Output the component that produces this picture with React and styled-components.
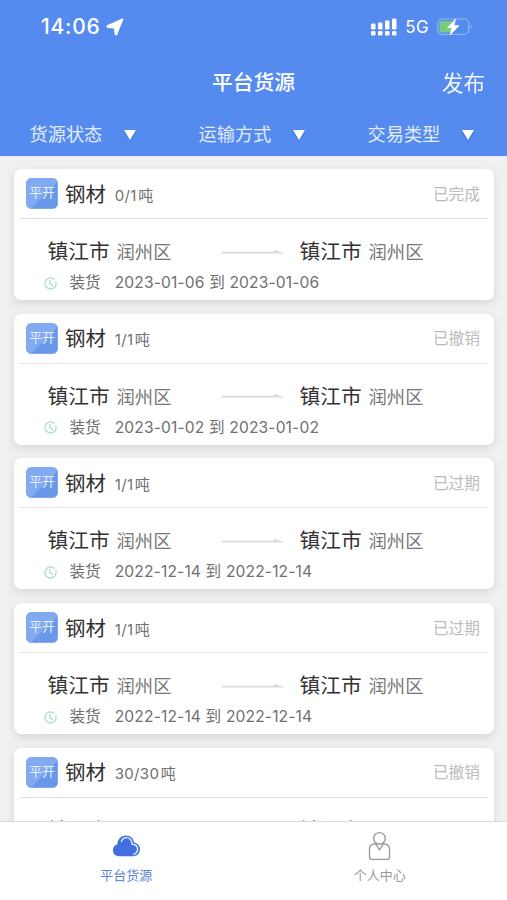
import React from 'react';
import styled, { createGlobalStyle } from 'styled-components';

const GlobalStyle = createGlobalStyle`
  * { box-sizing: border-box; }
  body { margin: 0; background: #f0f0f1; }
`;

const Screen = styled.div`
  width: 507px;
  height: 900px;
  display: flex;
  flex-direction: column;
  overflow: hidden;
  background: #f0f0f1;
  font-family: Inter, 'Noto Sans CJK SC', sans-serif;
  white-space: nowrap;
`;

const Header = styled.header`
  flex: none;
  height: 156px;
  background: #558bee;
  color: #fff;
`;

const StatusBar = styled.div`
  height: 54px;
  display: flex;
  align-items: center;
  padding: 0 34px 0 41px;
`;

const Clock = styled.span`
  font-size: 21px;
  line-height: 26px;
  font-weight: 500;
  letter-spacing: 0.8px;
  margin-right: 5px;
`;

const StatusIcons = styled.div`
  margin-left: auto;
  display: flex;
  align-items: center;
`;

const Network = styled.span`
  font-size: 17px;
  line-height: 22px;
  letter-spacing: 0.4px;
  margin: 0 8px 0 8px;
`;

const TitleBar = styled.div`
  height: 57px;
  display: grid;
  grid-template-columns: 1fr auto 1fr;
  align-items: center;
  padding: 0 22px;
`;

const Title = styled.h1`
  grid-column: 2;
  margin: 1px 0 0;
  font-size: 20.8px;
  line-height: 30px;
  font-weight: 500;
`;

const Publish = styled.span`
  justify-self: end;
  font-size: 21.5px;
  line-height: 30px;
  opacity: 0.93;
`;

const Filters = styled.div`
  height: 45px;
  display: grid;
  grid-template-columns: repeat(3, 169px);
`;

const Filter = styled.div`
  display: flex;
  align-items: center;
  height: 44px;
  padding-left: 29.5px;
  font-size: 18.2px;
  color: #e2ecff;
`;

const Caret = styled.svg`
  margin: 3px 0 0 21.7px;
  overflow: visible;
  filter: drop-shadow(0 1px 1px rgba(30, 70, 160, 0.35));
`;

const List = styled.main`
  flex: none;
  height: 665px;
  overflow: hidden;
  padding: 12px 13px 0 14px;
  display: flex;
  flex-direction: column;
  gap: 13.7px;
  border-top: 1px solid #e8edf6;
`;

const Card = styled.article`
  flex: none;
  height: 131px;
  border-radius: 7px;
  background: #fff;
  box-shadow: 0 3px 9px rgba(0, 0, 0, 0.11);
`;

const CardHead = styled.div`
  height: 50px;
  margin: 0 6px;
  padding: 0 8px 0 6px;
  display: flex;
  align-items: center;
  border-bottom: 1.5px solid #e2e2e2;
`;

const Badge = styled.span`
  width: 32px;
  height: 31px;
  border-radius: 5px;
  border: 1px solid #82a9ec;
  display: flex;
  align-items: center;
  justify-content: center;
  background: linear-gradient(135deg, #82aaf0 0 57%, #6a98e8 57.5%);
  color: #e7f0ff;
  font-size: 12.8px;
  line-height: 20px;
  padding-bottom: 1px;
`;

const Goods = styled.span`
  margin: 2px 0 0 7px;
  font-size: 20.4px;
  line-height: 30px;
  color: #2f2f2f;
`;

const Quantity = styled.span`
  margin: 4px 0 0 9px;
  font-size: 15px;
  line-height: 22px;
  letter-spacing: 0.3px;
  color: #707070;
`;

const Unit = styled.span`
  margin-left: 1.5px;
`;

const State = styled.span`
  margin: 2px 0 0 auto;
  font-size: 15.7px;
  line-height: 22px;
  color: #bbb;
`;

const Route = styled.div`
  height: 30px;
  margin-top: 18px;
  padding-left: 33.5px;
  display: grid;
  grid-template-columns: 174px 78px auto;
`;

const Place = styled.div`
  display: flex;
  align-items: center;
`;

const City = styled.span`
  font-size: 20.7px;
  line-height: 30px;
  color: #333;
`;

const District = styled.span`
  margin-left: 7px;
  font-size: 18.3px;
  line-height: 26px;
  color: #777;
`;

const Arrow = styled.svg`
  align-self: center;
  margin-top: 1px;
`;

const Schedule = styled.div`
  height: 24px;
  margin-top: 4px;
  padding-left: 29.5px;
  display: flex;
  align-items: center;
  font-size: 15.6px;
  line-height: 22px;
  color: #6f6f6f;
`;

const Loading = styled.span`
  margin: 0 14px 0 13px;
`;

const Dates = styled.span`
  letter-spacing: 0.14px;
`;

const TabBar = styled.nav`
  flex: none;
  height: 79px;
  background: #fff;
  border-top: 1px solid #dcdcdc;
  display: grid;
  grid-template-columns: 1fr 1fr;
`;

const Tab = styled.div`
  display: flex;
  flex-direction: column;
  align-items: center;
  padding: 8px 1px 0 0;
  color: ${(p) => (p.$active ? '#5b83d6' : '#999')};
`;

const TabIcon = styled.svg`
  height: 31px;
  margin-bottom: 4px;
`;

const TabLabel = styled.span`
  font-size: 13px;
  line-height: 20px;
`;

const filters = ['货源状态', '运输方式', '交易类型'];

const orders = [
  { quantity: '0/1', state: '已完成', date: '2023-01-06' },
  { quantity: '1/1', state: '已撤销', date: '2023-01-02' },
  { quantity: '1/1', state: '已过期', date: '2022-12-14' },
  { quantity: '1/1', state: '已过期', date: '2022-12-14' },
  { quantity: '30/30', state: '已撤销' },
];

function LocationIcon() {
  return (
    <svg width="18" height="18" viewBox="0 0 18 18">
      <path d="M16.6 1.2 L10.6 16 Q10 17 9.4 16 L8.6 9.8 L1.9 9.2 Q.6 8.6 1.9 7.7Z" fill="#fff" stroke="#fff" strokeWidth="1.6" strokeLinejoin="round" />
    </svg>
  );
}

function SignalIcon() {
  return (
    <svg width="26" height="18" viewBox="0 0 26 18" fill="#fff">
      {[5, 4, 2, 0].map((top, i) => (
        <g key={i}>
          <rect x={i * 7} y={top + 0.5} width="4.5" height={11 - top} rx="1.2" />
          <rect x={i * 7} y="13" width="4.5" height="4.5" rx="1.3" />
        </g>
      ))}
    </svg>
  );
}

function BatteryIcon() {
  return (
    <svg width="36" height="18" viewBox="0 0 36 18">
      <rect x=".8" y="1" width="31" height="15.5" rx="4.5" fill="none" stroke="#94b5f5" strokeWidth="1.2" />
      <path d="M33.5 6.5 Q36 8.7 33.5 11Z" fill="#94b5f5" />
      <path d="M5 3 H15 V14.5 H5 Q2.5 14.5 2.5 12 V5.5 Q2.5 3 5 3Z" fill="#7acb7d" />
      <path d="M18.5 1 L10.5 9.7 H15 L13.2 17 L22 7.6 H17Z" fill="#fff" stroke="#fff" strokeWidth=".7" strokeLinejoin="round" />
    </svg>
  );
}

function ClockIcon() {
  return (
    <svg width="13" height="13" viewBox="0 0 13 13" fill="none" stroke="#9fd5c8" strokeWidth="1.1">
      <circle cx="6.5" cy="6.5" r="5.6" strokeDasharray="30 2 2 1.2" />
      <path d="M5.9 3 V6.7 L9 8.7" />
    </svg>
  );
}

function CloudIcon() {
  return (
    <TabIcon width="29" viewBox="0 0 29 31">
      <path d="M7.2 26.3 Q1 25.9 1 20.2 Q1 15.6 5.2 14.4 Q6.2 5.7 13.6 5.4 Q20.6 5.2 22.2 12.4 Q28 13.6 28 19.6 Q27.6 25.5 21.8 26.3Z" fill="#416ee0" />
      <path d="M9.3 11.6 Q10.8 7.6 14.2 7.6 Q19.6 7.6 20.1 14.2 Q25.5 14.5 25.6 19.3 Q25.5 22.9 21.8 24.3" fill="none" stroke="#e7efff" strokeWidth="1.4" strokeLinecap="round" />
    </TabIcon>
  );
}

function PersonIcon() {
  return (
    <TabIcon width="23" viewBox="0 0 23 31" fill="none" stroke="#9b9b9b" strokeWidth="1.4" strokeLinejoin="round">
      <circle cx="11.5" cy="8.4" r="5.8" />
      <path d="M7.8 13.8 Q1.5 14 1.5 19 V27 Q1.5 29.4 4 29.4 H19 Q21.5 29.4 21.5 27 V19 Q21.5 14 15.2 13.8 L11.5 20Z" />
    </TabIcon>
  );
}

function Location() {
  return (
    <Place>
      <City>镇江市</City>
      <District>润州区</District>
    </Place>
  );
}

function OrderCard({ quantity, state, date }) {
  return (
    <Card>
      <CardHead>
        <Badge>平开</Badge>
        <Goods>钢材</Goods>
        <Quantity>
          {quantity}
          <Unit>吨</Unit>
        </Quantity>
        <State>{state}</State>
      </CardHead>
      <Route>
        <Location />
        <Arrow width="64" height="8" viewBox="0 0 64 8">
          <path d="M0 2.8 H52 V.8 L63 4.5 H0Z" fill="#d9d9d9" />
        </Arrow>
        <Location />
      </Route>
      {date && (
        <Schedule>
          <ClockIcon />
          <Loading>装货</Loading>
          <Dates>{date} 到 {date}</Dates>
        </Schedule>
      )}
    </Card>
  );
}

export default function App() {
  return (
    <Screen>
      <GlobalStyle />
      <Header>
        <StatusBar>
          <Clock>14:06</Clock>
          <LocationIcon />
          <StatusIcons>
            <SignalIcon />
            <Network>5G</Network>
            <BatteryIcon />
          </StatusIcons>
        </StatusBar>
        <TitleBar>
          <Title>平台货源</Title>
          <Publish>发布</Publish>
        </TitleBar>
        <Filters>
          {filters.map((label) => (
            <Filter key={label}>
              {label}
              <Caret width="12" height="10" viewBox="0 0 12 10">
                <path d="M0 0 H12 L6 10Z" fill="#fff" />
              </Caret>
            </Filter>
          ))}
        </Filters>
      </Header>
      <List>
        {orders.map((order, i) => (
          <OrderCard key={i} {...order} />
        ))}
      </List>
      <TabBar>
        <Tab $active>
          <CloudIcon />
          <TabLabel>平台货源</TabLabel>
        </Tab>
        <Tab>
          <PersonIcon />
          <TabLabel>个人中心</TabLabel>
        </Tab>
      </TabBar>
    </Screen>
  );
}
